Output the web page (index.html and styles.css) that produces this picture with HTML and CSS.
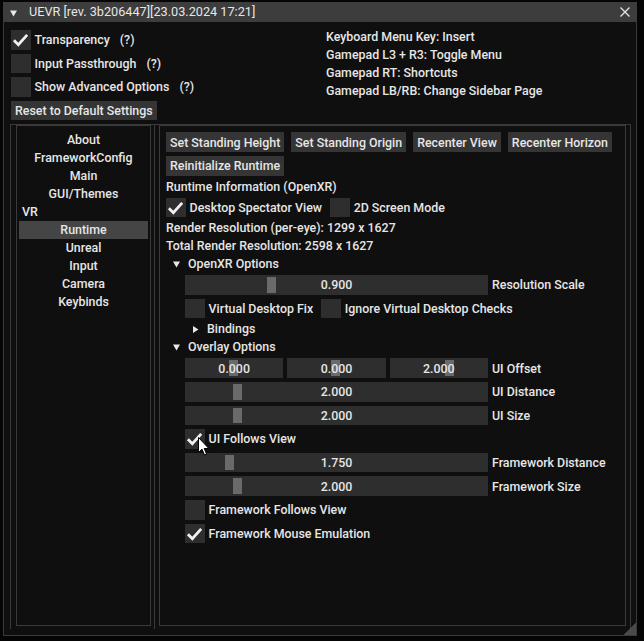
FILE: index.html
```html
<!DOCTYPE html>
<html>
<head>
<meta charset="utf-8">
<link rel="stylesheet" href="styles.css">
</head>
<body>
<div class="window">
  <div class="titlebar">
    <svg class="tri-title" width="7" height="7" viewBox="0 0 7 7"><polygon points="0,0.5 7,0.5 3.5,6.5" fill="#e8e8e8"/></svg>
    <span class="title">UEVR [rev. 3b206447][23.03.2024 17:21]</span>
    <svg class="close" width="10" height="10" viewBox="0 0 10 10"><path d="M0.5 0.5 L9.5 9.5 M9.5 0.5 L0.5 9.5" stroke="#e0e0e0" stroke-width="1.4"/></svg>
  </div>
  <div class="body">
    <div class="top">
      <div class="top-left">
        <div class="check-row"><span class="box"><svg viewBox="0 0 20 20"><path d="M3 10.5 L7.5 15 L16.5 5" class="tick"/></svg></span><span>Transparency</span><span class="help">(?)</span></div>
        <div class="check-row"><span class="box"></span><span>Input Passthrough</span><span class="help">(?)</span></div>
        <div class="check-row"><span class="box"></span><span>Show Advanced Options</span><span class="help">(?)</span></div>
        <div class="row"><span class="btn">Reset to Default Settings</span></div>
      </div>
      <div class="top-right">
        <div class="line">Keyboard Menu Key: Insert</div>
        <div class="line">Gamepad L3 + R3: Toggle Menu</div>
        <div class="line">Gamepad RT: Shortcuts</div>
        <div class="line">Gamepad LB/RB: Change Sidebar Page</div>
      </div>
    </div>
    <div class="columns">
      <div class="col col-side">
        <div class="child sidebar">
          <div class="item">About</div>
          <div class="item">FrameworkConfig</div>
          <div class="item">Main</div>
          <div class="item">GUI/Themes</div>
          <div class="item item-left">VR</div>
          <div class="item selected">Runtime</div>
          <div class="item">Unreal</div>
          <div class="item">Input</div>
          <div class="item">Camera</div>
          <div class="item">Keybinds</div>
        </div>
      </div>
      <div class="col col-main">
        <div class="child main">
          <div class="row btns">
            <span class="btn">Set Standing Height</span>
            <span class="btn">Set Standing Origin</span>
            <span class="btn">Recenter View</span>
            <span class="btn">Recenter Horizon</span>
          </div>
          <div class="row btns"><span class="btn">Reinitialize Runtime</span></div>
          <div class="line">Runtime Information (OpenXR)</div>
          <div class="check-row">
            <span class="box"><svg viewBox="0 0 20 20"><path d="M3 10.5 L7.5 15 L16.5 5" class="tick"/></svg></span><span>Desktop Spectator View</span>
            <span class="box next"></span><span>2D Screen Mode</span>
          </div>
          <div class="line">Render Resolution (per-eye): 1299 x 1627</div>
          <div class="line">Total Render Resolution: 2598 x 1627</div>
          <div class="tree"><svg class="tri" width="7" height="7" viewBox="0 0 7 7"><polygon points="0,0.5 7,0.5 3.5,6.5" fill="#e8e8e8"/></svg><span>OpenXR Options</span></div>
          <div class="slider-row ind">
            <div class="slider"><span class="grab" style="left:82px"></span><span class="val">0.900</span></div>
            <span class="slabel">Resolution Scale</span>
          </div>
          <div class="check-row ind">
            <span class="box"></span><span>Virtual Desktop Fix</span>
            <span class="box next"></span><span>Ignore Virtual Desktop Checks</span>
          </div>
          <div class="tree ind"><svg class="tri" width="7" height="7" viewBox="0 0 7 7"><polygon points="1,0 6.5,3.5 1,7" fill="#e8e8e8"/></svg><span>Bindings</span></div>
          <div class="tree"><svg class="tri" width="7" height="7" viewBox="0 0 7 7"><polygon points="0,0.5 7,0.5 3.5,6.5" fill="#e8e8e8"/></svg><span>Overlay Options</span></div>
          <div class="slider-row ind">
            <div class="triple">
              <div class="slider seg"><span class="grab" style="left:44px"></span><span class="val">0.000</span></div>
              <div class="slider seg"><span class="grab" style="left:44px"></span><span class="val">0.000</span></div>
              <div class="slider seg"><span class="grab" style="left:55px"></span><span class="val">2.000</span></div>
            </div>
            <span class="slabel">UI Offset</span>
          </div>
          <div class="slider-row ind">
            <div class="slider"><span class="grab" style="left:48px"></span><span class="val">2.000</span></div>
            <span class="slabel">UI Distance</span>
          </div>
          <div class="slider-row ind">
            <div class="slider"><span class="grab" style="left:48px"></span><span class="val">2.000</span></div>
            <span class="slabel">UI Size</span>
          </div>
          <div class="check-row ind">
            <span class="box"><svg viewBox="0 0 20 20"><path d="M3 10.5 L7.5 15 L16.5 5" class="tick"/></svg></span><span>UI Follows View</span>
          </div>
          <div class="slider-row ind">
            <div class="slider"><span class="grab" style="left:40px"></span><span class="val">1.750</span></div>
            <span class="slabel">Framework Distance</span>
          </div>
          <div class="slider-row ind">
            <div class="slider"><span class="grab" style="left:48px"></span><span class="val">2.000</span></div>
            <span class="slabel">Framework Size</span>
          </div>
          <div class="check-row ind">
            <span class="box"></span><span>Framework Follows View</span>
          </div>
          <div class="check-row ind">
            <span class="box"><svg viewBox="0 0 20 20"><path d="M3 10.5 L7.5 15 L16.5 5" class="tick"/></svg></span><span>Framework Mouse Emulation</span>
          </div>
        </div>
      </div>
    </div>
  </div>
  <div class="grip"></div>
</div>
<svg class="cursor" width="12" height="19" viewBox="0 0 12 19"><path d="M0.5 0.5 L0.5 15.5 L4 12.2 L6.5 18 L8.6 17.1 L6.2 11.5 L10.8 11.5 Z" fill="#ffffff" stroke="#000000" stroke-width="1"/></svg>
</body>
</html>
```
FILE: styles.css
```css
* { box-sizing: border-box; margin: 0; padding: 0; }
html, body { height: 100%; }
body {
  background: #050505;
  font-family: Roboto, "Liberation Sans", sans-serif;
  font-size: 12.4px;
  font-weight: 500;
  color: #e6e6e6;
  padding: 2px 0 0 3px;
  overflow: hidden;
  position: relative;
}
.window {
  width: 634px;
  height: 634px;
  border: 1px solid #3a3a3a;
  border-top: none;
  background: #0f0f0f;
  display: flex;
  flex-direction: column;
  position: relative;
}
.titlebar {
  height: 20px;
  margin: 0 -1px;
  background: #3d3d3d;
  display: flex;
  align-items: center;
  padding-left: 7px;
  flex-shrink: 0;
}
.tri-title { margin-top: 2px; }
.title { margin-left: 12px; line-height: 14px; font-weight: 400; font-size: 12.7px; }
.close { margin-left: auto; margin-right: 7px; }
.body {
  flex: 1;
  display: flex;
  flex-direction: column;
  padding: 8px 7px 6px 7px;
  min-height: 0;
}
.top { display: flex; flex-shrink: 0; }
.top-left { width: 315px; display: flex; flex-direction: column; gap: 4px; }
.top-right { display: flex; flex-direction: column; gap: 4px; }
.line { line-height: 14px; height: 14px; white-space: nowrap; }
.row { display: flex; }
.check-row { display: flex; align-items: center; height: 19.6px; white-space: nowrap; }
.box {
  width: 19.6px;
  height: 19.6px;
  background: #2e2e2e;
  margin-right: 4px;
  flex-shrink: 0;
  display: flex;
}
.box svg { width: 100%; height: 100%; }
.box.next { margin-left: 8px; }
.tick { fill: none; stroke: #f2f2f2; stroke-width: 2.8; }
.help { margin-left: 10px; }
.btn {
  height: 19.6px;
  padding: 0 4px;
  background: #353535;
  display: inline-flex;
  align-items: center;
  white-space: nowrap;
}
.btns { gap: 7px; }
.columns {
  flex: 1;
  margin-top: 4px;
  margin-left: -1px;
  width: 621px;
  display: flex;
  border-top: 1px solid #3a3a3a;
  border-left: 1px solid #3a3a3a;
  min-height: 0;
}
.col { display: flex; flex-direction: column; }
.col-side {
  width: 144px;
  border-right: 1px solid #3a3a3a;
  padding: 0 3px 3px 5px;
}
.col-main {
  width: 476px;
  border-right: 1px solid #3a3a3a;
  padding: 0 4px 3px 4px;
}
.child {
  flex: 1;
  border: 1px solid #3a3a3a;
  background: #0f0f0f;
}
.sidebar { padding: 5px 2px; }
.item {
  height: 18px;
  line-height: 18px;
  text-align: center;
  white-space: nowrap;
}
.item-left { text-align: left; padding-left: 3px; }
.selected { background: #454545; }
.main {
  padding: 6px;
  display: flex;
  flex-direction: column;
  gap: 4px;
}
.ind { margin-left: 19px; }
.tree { display: flex; align-items: center; height: 14px; line-height: 14px; }
.tri { margin-left: 7px; margin-right: 8px; flex-shrink: 0; }
.slider-row { display: flex; align-items: center; height: 19.6px; }
.slider {
  position: relative;
  width: 303px;
  height: 19.6px;
  background: #2e2e2e;
  display: flex;
  align-items: center;
  justify-content: center;
  flex-shrink: 0;
}
.triple { display: flex; gap: 4px; width: 303px; flex-shrink: 0; }
.slider.seg { flex: 1; width: auto; }
.grab {
  position: absolute;
  top: 2px;
  bottom: 2px;
  width: 9px;
  background: #6a6a6a;
}
.val { position: relative; }
.slabel { margin-left: 4px; white-space: nowrap; }
.grip {
  position: absolute;
  right: 0;
  bottom: 0;
  width: 12px;
  height: 12px;
  background: linear-gradient(135deg, transparent 50%, #4a4a4a 50%);
}
.cursor {
  position: absolute;
  left: 198px;
  top: 437px;
}
```
